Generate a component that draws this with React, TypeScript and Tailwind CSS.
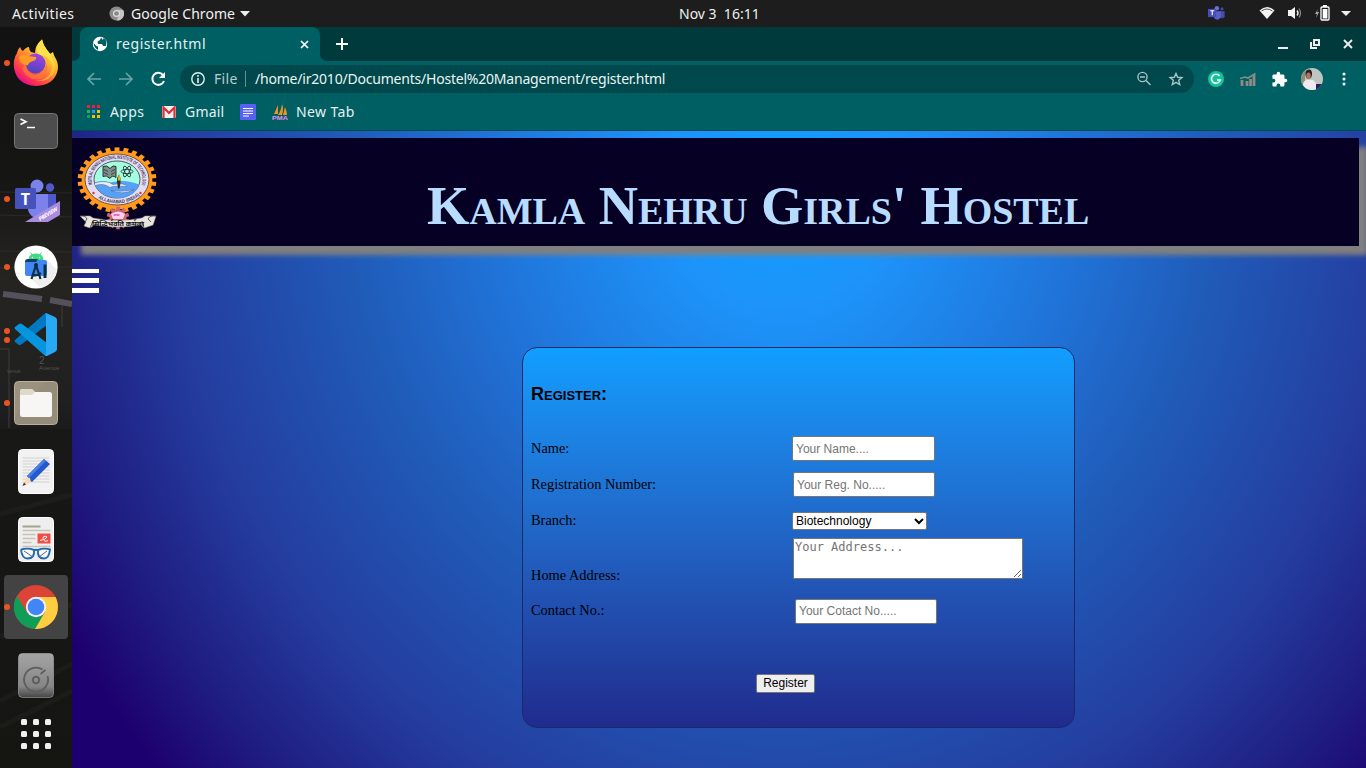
import type { ReactNode } from "react";

const apps = ["#ff1744", "#ff1744", "#ff1744", "#34a853", "#4285f4", "#fbbc05", "#0aa550", "#fbbc05", "#fbbc05"];

function Gear({ cx, cy, r, teeth, tooth, color }: { cx: number; cy: number; r: number; teeth: number; tooth: number; color: string }) {
  return (
    <g fill={color}>
      <circle cx={cx} cy={cy} r={r} />
      {Array.from({ length: teeth }, (_, i) => (
        <rect key={i} x={cx - tooth / 2} y={cy - r - tooth * 0.8} width={tooth} height={tooth * 1.5} transform={`rotate(${(i * 360) / teeth} ${cx} ${cy})`} />
      ))}
    </g>
  );
}

function CollegeLogo() {
  return (
    <svg width="80" height="82" viewBox="0 0 80 82" className="block overflow-visible">
      <defs>
        <path id="ringTop" d="M16 37.500 A25.500 20.800 0 1 1 64 37.500" />
        <path id="ringBottom" d="M14 42.500 A30 23.500 0 0 0 66 42.500" />
      </defs>
      <g transform="translate(0 -2) scale(1 .83)">
        <Gear cx={40} cy={39.8} r={35.4} teeth={26} tooth={4.9} color="#ff9a1c" />
      </g>
      <g transform="translate(0 -0.5)">
        <ellipse cx="40" cy="31" rx="32" ry="25.500" fill="#e2dcf5" stroke="#5b3a2a" strokeWidth=".8" />
        <ellipse cx="40" cy="31" rx="23" ry="18.500" fill="#a3ffe2" stroke="#333" strokeWidth=".8" />
        <path d="M17.500 34 Q25 31 33 34 Q48 30 62 36 Q58 49 40 49.500 Q21 48 17.500 34Z" fill="#55a0f8" />
        <path d="M18 34.500 Q29 31 36 36 Q48 34 50 38 Q36 37 33 39 Q27 34 18 37M34 42 Q44 44 57 41 Q46 47 34 42" fill="#e8ecff" stroke="#446" strokeWidth=".4" />
        <path d="M26 18 Q30 16 33 20 Q36 16 39 18 V29 Q35 26 33 30 Q29 26 26 28Z" fill="#7f8f8b" stroke="#222" strokeWidth=".9" />
        <path d="M27 21 l4 2 M27 24 l4 2 M34 23 l4-2 M34 26 l4-2" stroke="#222" strokeWidth=".7" />
        <g fill="none" stroke="#222" strokeWidth=".8">
          <ellipse cx="50" cy="23" rx="6" ry="2.200" />
          <ellipse cx="50" cy="23" rx="6" ry="2.200" transform="rotate(60 50 23)" />
          <ellipse cx="50" cy="23" rx="6" ry="2.200" transform="rotate(120 50 23)" />
        </g>
        <path d="M42 26 l1.500 4 v4 l-1 6 h-1.500 l-1-7 v-3z" fill="#322915" />
        <path d="M42 25 l1.500 4 v3 h-3z" fill="#d6b340" />
      </g>
      <text fontSize="5" fontWeight="bold" fill="#3c3350" fontFamily="Liberation Sans, sans-serif">
        <textPath href="#ringTop" startOffset="2" textLength="84" lengthAdjust="spacingAndGlyphs">MOTILAL NEHRU NATIONAL INSTITUTE OF TECHNOLOGY</textPath>
      </text>
      <text fontSize="4.800" fontWeight="bold" fill="#3c3350" fontFamily="Liberation Sans, sans-serif">
        <textPath href="#ringBottom" startOffset="10" textLength="44" lengthAdjust="spacingAndGlyphs">ALLAHABAD (INDIA)</textPath>
      </text>
      <circle cx="16.500" cy="44" r="1.200" fill="#d33" />
      <circle cx="63.500" cy="44" r="1.200" fill="#d33" />
      <Gear cx={41} cy={69} r={8.5} teeth={10} tooth={3.5} color="#cc6670" />
      <path d="M34 65 Q41 60 48 65 L46 70 H36Z" fill="#ffd2ef" />
      <text x="36.500" y="67" fontSize="4" fill="#d42fa0" fontWeight="bold" fontFamily="Liberation Sans, sans-serif">ww</text>
      <path d="M3 67 L13 67 16 69 Q40 74 65 69 L68 67 79 67 76 76 67 79 64 76 Q40 80 17 76 L13 79 7 77 9 73Z" fill="#e9e5dc" stroke="#999" strokeWidth=".5" />
      <path d="M3 67 q5 -1 7 3 l-2 3M79 67 q-6 -1 -8 3 l3 3M13 79 l3-7M67 79 l-2-7" fill="none" stroke="#333" strokeWidth=".8" />
      <text x="15" y="76.500" fontSize="7" fontWeight="bold" fill="#111" textLength="52" lengthAdjust="spacingAndGlyphs" fontFamily="Noto Sans, Noto Sans Devanagari, sans-serif">सिद्धिर्भवति कर्मजा</text>
    </svg>
  );
}

function Firefox() {
  return (
    <svg width="46" height="48" viewBox="0 0 46 48">
      <defs>
        <linearGradient id="ffx" x1=".85" y1=".1" x2=".25" y2=".95">
          <stop offset="0" stopColor="#fff04a" />
          <stop offset=".35" stopColor="#ffb52e" />
          <stop offset=".62" stopColor="#ff6a35" />
          <stop offset=".85" stopColor="#ff2f55" />
          <stop offset="1" stopColor="#e3108b" />
        </linearGradient>
        <linearGradient id="ffp" x1=".6" y1="0" x2=".3" y2="1">
          <stop offset="0" stopColor="#a044e8" />
          <stop offset="1" stopColor="#4c43b8" />
        </linearGradient>
      </defs>
      <path d="M4 14 Q5 10 7 8 Q8 11 10 12 Q13 8 16 8 Q16 11 18 13 L22 14 Q22 6 29 .500 Q30 6 34 11 Q36 13 37 15 L40 13 Q41 17 43 20 Q46 26 44.500 32 Q41 46 23 47 Q4 46 1 29 Q0 20 4 14Z" fill="url(#ffx)" />
      <path d="M34 18 Q42 24 37 35 Q33 41 23 42 Q37 43 42 32 Q44 24 40 16Z" fill="#ffc83a" opacity=".7" />
      <circle cx="22.500" cy="24.500" r="10" fill="url(#ffp)" />
      <path d="M6 18 Q10 14 15 17 L23 18 Q24 21 20 22 Q16 23 15 26 Q12 27 7 23Z" fill="#ff9a22" />
      <path d="M13 25 Q13 35 23 36 Q33 34 33 24 Q37 36 27 40 Q13 42 9 29Z" fill="#ff7a3a" opacity=".75" />
      <path d="M25 15 Q21 7 29 .500 Q30 6 34 11 Q41 18 41 28 Q38 20 31 17Z" fill="#ffe24a" />
    </svg>
  );
}

function ChromeIcon() {
  return (
    <svg width="44" height="44" viewBox="0 0 44 44">
      <circle cx="22" cy="22" r="22" fill="#db4437" />
      <path d="M22 44 A22 22 0 0 1 2.900 11 L13 27.500 22 32 30.500 27Z" fill="#0f9d58" />
      <path d="M22 12 H41.500 A22 22 0 0 1 21 44 L31 27Z" fill="#ffcd40" />
      <circle cx="22" cy="22" r="10.200" fill="#f1f1f1" />
      <circle cx="22" cy="22" r="8.300" fill="#4285f4" />
    </svg>
  );
}

function Terminal() {
  return (
    <svg width="44" height="36" viewBox="0 0 44 36">
      <rect x=".5" y=".5" width="43" height="35" rx="4" fill="#4d4d4d" stroke="#777" />
      <path d="M6.500 6 l5.500 2.800 -5.500 2.800" fill="none" stroke="#fff" strokeWidth="1.700" />
      <path d="M13 14.500 h8" stroke="#fff" strokeWidth="1.500" />
    </svg>
  );
}

function Teams() {
  return (
    <svg width="46" height="44" viewBox="0 0 46 44">
      <circle cx="23" cy="7" r="6.500" fill="#7b83eb" />
      <circle cx="36" cy="8.500" r="4.200" fill="#5059c9" />
      <path d="M30 15 H42 V28 Q40 34 33 33Z" fill="#5059c9" />
      <path d="M14 15 H34 V30 Q31 40 23 39 Q16 38 14 31Z" fill="#7b83eb" />
      <rect x="1" y="9" width="21" height="21" rx="1.500" fill="#4652bc" />
      <text x="11.500" y="25.500" textAnchor="middle" fontSize="16" fontWeight="bold" fill="white" fontFamily="Open Sans, sans-serif">T</text>
      <path d="M11 43 L46 22 V36 L34 43Z" fill="#a98bdf" />
      <text transform="translate(26 42) rotate(-31)" fontSize="5.500" fontWeight="bold" fontStyle="italic" fill="white" fontFamily="Open Sans, sans-serif" textLength="21">PREVIEW</text>
    </svg>
  );
}

function Studio() {
  return (
    <svg width="44" height="44" viewBox="0 0 44 44">
      <circle cx="22" cy="22" r="21.600" fill="#fff" />
      <path d="M33 15 L43 25 Q39 39 27 43 L15 32Z" fill="#eee" />
      <path d="M14.500 15 Q14.500 8.500 22 8.500 Q29 8.500 29.500 15Z" fill="#3ddc84" />
      <path d="M16.500 7.500 l2 3 M27.500 7.500 l-2 3" stroke="#3ddc84" />
      <circle cx="18.500" cy="12.500" r=".7" fill="#fff" /><circle cx="25.500" cy="12.500" r=".7" fill="#fff" />
      <rect x="11" y="15" width="22" height="16" rx="2" fill="#4285f4" />
      <path d="M11 17 q0-3 3-3 h10 l-2 3 h-11z" fill="#123d63" />
      <path d="M22 20 L17.500 34 M22 20 L26.500 34 M18 29 Q22 32 27 28" fill="none" stroke="#083042" strokeWidth="2.200" />
      <path d="M31 19.500 V33" fill="none" stroke="#083042" strokeWidth="3" />
      <circle cx="22" cy="20" r="2" fill="#083042" />
    </svg>
  );
}

function Code() {
  return (
    <svg width="44" height="44" viewBox="0 0 44 44">
      <path d="M1 27 Q0 28 1 29 L5 32 Q6 32.500 8 31 L33 12 V0 Q31 0 29 2Z" fill="#0078c4" />
      <path d="M1 16 Q0 15 1 14 L5 11 Q6 10 8 11 L33 30 V43 Q31 43 29 41Z" fill="#0795de" />
      <path d="M31 0 Q32 0 33 .500 L41 4 Q43 5 43 7 V36 Q43 38 41 39 L33 43 Q31 43 30 42 Q32 43 32 39 V3 Q32 1 31 0Z" fill="#29a9f3" />
    </svg>
  );
}

function Files() {
  return (
    <svg width="44" height="44" viewBox="0 0 44 44">
      <rect x=".5" y=".5" width="43" height="43" rx="4" fill="#9b917e" stroke="#bab09c" />
      <path d="M1 34 L30 1 H40 Q43 1 43 5 V40 Q43 43 39 43 H4 Q1 43 1 39Z" fill="#898172" opacity=".3" />
      <path d="M6 11 Q6 8 8 8 H18 L21 11 V20 H6Z" fill="#ddd6c5" />
      <rect x="6" y="11" width="32" height="25" rx="2.500" fill="#f7f6f5" />
      <path d="M6 11 Q6 8 8 8 H18 L21 11 18 14 H6Z" fill="#ded9c9" />
    </svg>
  );
}

function Editor() {
  return (
    <svg width="36" height="45" viewBox="0 0 36 45">
      <rect x=".5" y=".5" width="35" height="44" rx="4" fill="#f2f2f2" stroke="#fff" />
      <path d="M4.500 9 h27 M4.500 12 h27 M4.500 15 h27 M4.500 18 h27 M4.500 21 h27 M4.500 24 h27 M4.500 27 h27 M4.500 30 h27 M4.500 33 h27" stroke="#d0d0d0" />
      <path d="M4.500 37 L9 27 L14 33Z" fill="#fbd9b6" />
      <path d="M4.500 37 l1.500-3.500 2 2z" fill="#333" />
      <path d="M9 27 L26 10 L32 15 L14 33 Q12 32 12 29 Q10 29 9 27Z" fill="#2458cf" />
      <path d="M9 27 L26 10 L28 12 L11 29Z" fill="#4a7ee6" />
    </svg>
  );
}

function Reader() {
  return (
    <svg width="36" height="45" viewBox="0 0 36 45">
      <rect x=".5" y=".5" width="35" height="44" rx="4" fill="#eee" stroke="#fff" />
      <path d="M4.500 9.500 h18" stroke="#a6a28d" strokeWidth="2" />
      <path d="M4.500 13.500 h28 M4.500 17.500 h13 M4.500 21.500 h13 M4.500 25.500 h9 M4.500 29.500 h28" stroke="#c6c3b5" strokeWidth="1.700" />
      <rect x="19.500" y="16.500" width="13" height="10" fill="#f24d43" />
      <path d="M22 23.500 q6-1 7-3.500 q-4-2-4 1.500 q1 4 5 2" fill="none" stroke="white" />
      <path d="M3 32.500 Q10 30.500 16 33 Q17 41.500 9.500 41.500 Q4 41.500 3 32.500 M20 33 Q26 30.500 32 32.500 Q31 41.500 26 41.500 Q19 41.500 20 33 M16 33.500 q2-1.500 4 0" fill="#ffffff88" stroke="#2468ac" strokeWidth="1.900" />
      <path d="M6 34 L15 40 M21 40 L29 34" stroke="#667" strokeWidth="1" />
    </svg>
  );
}

function Disk() {
  return (
    <svg width="36" height="45" viewBox="0 0 36 45">
      <defs>
        <linearGradient id="disk" x2="0" y2="1">
          <stop stopColor="#a4a4a4" />
          <stop offset=".75" stopColor="#868686" />
          <stop offset="1" stopColor="#454545" />
        </linearGradient>
      </defs>
      <rect x=".5" y=".5" width="35" height="44" rx="4" fill="url(#disk)" stroke="#bbb" strokeOpacity=".5" />
      <path d="M24.500 16.500 A12 12 0 1 0 29.500 23 M22.500 21 l5-4" fill="none" stroke="#5e5e5e" strokeWidth="1.800" />
      <circle cx="18" cy="27" r="3.200" fill="none" stroke="#5e5e5e" strokeWidth="2" />
    </svg>
  );
}

function DockItem({ children, dots = 0, active = false }: { children: ReactNode; dots?: number; active?: boolean }) {
  return (
    <div className="relative flex h-[68px] w-full items-center justify-center">
      {active && <div className="absolute inset-x-1 inset-y-0.5 rounded-[4px] bg-[#434343]" />}
      {dots > 0 && (
        <div className="absolute left-1 flex flex-col gap-[3px]">
          <i className="block size-[6px] rounded-full bg-[#e95420]" />
          {dots === 2 && <i className="block size-[6px] rounded-full bg-[#e95420]" />}
        </div>
      )}
      <div className="relative">{children}</div>
    </div>
  );
}

function Dock() {
  return (
    <aside className="relative h-[741px] w-[72px] shrink-0 overflow-hidden bg-[#171717]">
      <svg className="absolute inset-0" width="72" height="741">
        <defs>
          <linearGradient id="dock" x2="0" y2="1">
            <stop stopColor="#121212" />
            <stop offset=".2" stopColor="#151514" />
            <stop offset=".34" stopColor="#252421" />
            <stop offset=".5" stopColor="#202020" />
            <stop offset=".58" stopColor="#171716" />
            <stop offset="1" stopColor="#151512" />
          </linearGradient>
        </defs>
        <rect width="72" height="741" fill="url(#dock)" />
        <path d="M0 165 L72 166 M0 188 L72 190 M0 224 L72 225 M0 241 L72 240" stroke="#3b352a" strokeWidth="1" opacity=".6" />
        <path d="M3 267 L42 272 M50 273 L72 277" stroke="#615d6d" strokeWidth="6" opacity=".8" />
        <path d="M0 322 H9 V401 M62 278 V300" fill="none" stroke="#3e3b36" strokeWidth="2" opacity=".55" />
        <path d="M0 402 H72 V470 L0 487Z" fill="#181817" />
        <path d="M0 487 L72 468 M0 610 L72 577 M0 674 L72 637 M0 700 L72 664" fill="none" stroke="#292824" strokeWidth="5" opacity=".35" />
        <g fill="#54514d" fontFamily="Liberation Sans, sans-serif">
          <text x="39" y="337" fontSize="10">2</text>
          <text x="39" y="343" fontSize="6">Avenue</text>
          <text x="7" y="346" fontSize="5">venue</text>
        </g>
      </svg>
      <div className="relative flex flex-col items-center pt-[2px]">
        <DockItem dots={1}><Firefox /></DockItem>
        <DockItem><Terminal /></DockItem>
        <DockItem dots={1}><div className="pl-0.5 pt-1"><Teams /></div></DockItem>
        <DockItem dots={1}><Studio /></DockItem>
        <DockItem dots={2}><Code /></DockItem>
        <DockItem dots={1}><Files /></DockItem>
        <DockItem><Editor /></DockItem>
        <DockItem><Reader /></DockItem>
        <DockItem dots={1} active><ChromeIcon /></DockItem>
        <DockItem><Disk /></DockItem>
        <div className="mt-[10px] grid grid-cols-3 gap-[6px]">
          {apps.map((_, i) => <i key={i} className="block size-[6px] rounded-[1.5px] bg-[#f0f0f0]" />)}
        </div>
      </div>
    </aside>
  );
}

function TopBar() {
  return (
    <header className="relative flex h-[27px] items-center bg-[#1d1d1d] pl-3 text-[14px] text-[#f0f0f0]">
      <span className="w-[97px] tracking-[0.4px]">Activities</span>
      <svg width="15" height="15" viewBox="0 0 16 16">
        <circle cx="8" cy="8" r="7.500" fill="#8c8c8c" />
        <path d="M8 4 h7 A7.500 7.500 0 0 1 8 15.500 L11 9Z" fill="#c4c4c4" />
        <circle cx="8" cy="8" r="3.800" fill="#ddd" /><circle cx="8" cy="8" r="2.500" fill="#888" />
      </svg>
      <span className="ml-[7px] w-[105px] tracking-[0.05px]">Google Chrome</span>
      <svg width="12" height="6" className="ml-[3px]"><path d="M1 0 H11 L6 5.500Z" fill="#eee" /></svg>
      <span className="absolute left-[679px] pb-px">Nov 3&nbsp; 16:11</span>
      <div className="ml-auto flex items-center pr-[15px] pb-px">
        <svg width="17" height="16" viewBox="0 0 46 40"><circle cx="24" cy="7" r="6" fill="#6871d5" /><circle cx="38" cy="9" r="4" fill="#444cae" /><path d="M29 15 H45 V31 Q38 38 30 31Z" fill="#444cae" /><path d="M16 15 H35 V31 Q27 45 16 33Z" fill="#5961c8" /><rect y="9" width="22" height="22" fill="#454dbc" /><path d="M6 14 H17 M11.500 14 V26" stroke="#fff" strokeWidth="3" /></svg>
        <svg width="16" height="14" viewBox="0 0 16 14" className="ml-[34px]"><path d="M.5 4.500 Q8-2.500 15.500 4.500 L8 13Z" fill="#f4f4f4" /><path d="M2.500 5 Q8 1 13.500 5" fill="none" stroke="#555" strokeWidth="1" /></svg>
        <svg width="16" height="14" viewBox="0 0 16 14" className="ml-3"><path d="M1 4 H4 L8 1 V13 L4 10 H1Z" fill="#f4f4f4" /><path d="M10 4.500 q2 2.500 0 5" fill="none" stroke="#eee" strokeWidth="1.400" /><path d="M12 2.500 q3 4.500 0 9" fill="none" stroke="#888" strokeWidth="1.200" /></svg>
        <svg width="15" height="16" viewBox="0 0 15 16" className="ml-3"><path d="M3 4 L0 9 H2 L1 13 L4 7 H2Z" fill="#aaa" /><rect x="6" y="2" width="8" height="13" rx="1" fill="none" stroke="#fff" strokeWidth="1.300" /><path d="M8 0 h4 v2 H8Z M7.700 4 h4.700 v9.500 H7.700Z" fill="#fff" /></svg>
        <svg width="10" height="5" className="ml-[11px]"><path d="M0 0 H10 L5 5Z" fill="#eee" /></svg>
      </div>
    </header>
  );
}

function Browser() {
  return (
    <div className="h-[104px] bg-[#005f63] text-[14px] text-[#e5f1f1]">
      <div className="flex h-[34px] bg-[#003a3d]">
        <div className="flex w-2 items-end bg-[#005f63]"><div className="h-full w-full rounded-br-[7px] bg-[#003a3d]" /></div>
        <div className="flex w-[240px] items-center rounded-t-[8px] bg-[#005f63] pl-[12px]">
          <svg width="16" height="16" viewBox="0 0 16 16"><circle cx="8" cy="8" r="7.200" fill="#fff" /><path d="M1.500 7 L4.500 10 6 10.500 6 14 Q2 12 1.500 7 M9 1.500 L8 4 5.500 5.500 6 8 10 8 11 10 14 10 Q15.500 4 11.500 2 L11 4Z" fill="#005f63" /></svg>
          <span className="ml-[8px] pb-[2px] tracking-[0.55px]">register.html</span>
          <svg width="9" height="9" className="ml-auto mr-[11.5px]"><path d="M1 1 L8 8 M8 1 L1 8" stroke="#fff" strokeWidth="1.700" /></svg>
        </div>
        <div className="w-2 bg-[#005f63]"><div className="h-full rounded-bl-[7px] bg-[#003a3d]" /></div>
        <svg width="12" height="12" className="ml-2 mt-[11px]"><path d="M6 0 V12 M0 6 H12" stroke="#fff" strokeWidth="2" /></svg>
        <svg width="76" height="12" className="ml-auto mr-[12px] mt-[11px]"><path d="M0 10 h10" stroke="#eee" strokeWidth="2" /><path d="M36 2 h5 v5 h-5z M33 4 v6 h6" fill="none" stroke="#eee" strokeWidth="2" /><path d="M66 2 L74 10 M74 2 L66 10" stroke="#eee" strokeWidth="1.900" /></svg>
      </div>
      <div className="flex h-[36px] items-center">
        <svg width="80" height="18" className="ml-[14px]" fill="none" strokeWidth="1.700">
          <path d="M15 9 H2 M8 3 L2 9 8 15 M33 9 H46 M40 3 L46 9 40 15" stroke="#6aa3a5" />
          <path d="M77 5 A6 6 0 1 0 78 11" stroke="#fff" strokeWidth="2" /><path d="M79 2 V8 H73Z" fill="#fff" />
        </svg>
        <div className="ml-[14px] flex h-7 w-[1014px] items-center rounded-full bg-[#00484c] pl-[11px]">
          <svg width="14" height="14"><circle cx="7" cy="7" r="6.200" fill="none" stroke="#e5f1f1" strokeWidth="1.400" /><path d="M7 3 V4.800 M7 6 V11" stroke="#e5f1f1" strokeWidth="1.600" /></svg>
          <span className="ml-[9px] w-[31px] pb-[2px] tracking-[0.3px] text-[#b4cfcf]">File</span>
          <i className="h-4 w-px bg-[#668d8f]" />
          <span className="ml-[9px] pb-[2px] tracking-[-0.21px] text-[#e8f5f4]">/home/ir2010/Documents/Hostel%20Management/register.html</span>
          <svg width="47" height="16" className="ml-auto mr-[10px]" fill="none" stroke="#a8c4c5" strokeWidth="1.400"><circle cx="5.500" cy="6" r="4.600" /><path d="M9 9.500 L13.500 14 M3 6 H8" /><path d="M39 2.500 L40.700 6.300 44.900 6.600 41.700 9.300 42.700 13.500 39 11.300 35.300 13.500 36.300 9.300 33.100 6.600 37.300 6.300Z" /></svg>
        </div>
        <svg width="16" height="16" viewBox="0 0 16 16" className="ml-[14px]"><circle cx="8" cy="8" r="8" fill="#15c39a" /><path d="M11.500 5 A4.500 4.500 0 1 0 12.300 9 H9" fill="none" stroke="#fff" strokeWidth="1.500" /></svg>
        <svg width="16" height="14" className="ml-[16px]"><path d="M2 14 V8 M7 14 V9 M10.500 14 V7 M14 14 V3" stroke="#8f8a86" strokeWidth="2.800" /><path d="M0 6.500 L5 5 8 6 15.500 1.500" fill="none" stroke="#8f8a86" strokeWidth="1.600" /></svg>
        <svg width="17" height="17" viewBox="0 0 24 24" className="ml-[15px]" fill="#fff"><path d="M20.500 11H19V7c0-1.100-.9-2-2-2h-4V3.500a2.500 2.500 0 0 0-5 0V5H4c-1.100 0-2 .9-2 2v3.800h1.500a2.700 2.700 0 0 1 0 5.400H2V20c0 1.100.9 2 2 2h3.800v-1.500a2.700 2.700 0 0 1 5.400 0V22H17c1.100 0 2-.9 2-2v-4h1.500a2.500 2.500 0 0 0 0-5z" /></svg>
        <svg width="22" height="22" viewBox="0 0 22 22" className="ml-[12.5px]"><defs><clipPath id="avatar"><circle cx="11" cy="11" r="11" /></clipPath></defs><g clipPath="url(#avatar)"><rect width="22" height="22" fill="#bdc6c0" /><path d="M0 0 H5 L3 22 H0V0Z" fill="#8f8c79" /><path d="M4.500 7 Q4 1.500 8 1.500 Q11.500 1.500 11 7 L10 10 H5.500Z" fill="#292320" /><ellipse cx="7.500" cy="8" rx="2.300" ry="3.500" fill="#a87560" /><path d="M1 22 L2.500 14 6 11.500 12 12 15 15 15 22Z" fill="#eeeaf0" /><path d="M15 16 h7 v6 h-7z" fill="#29215a" /></g></svg>
        <svg width="4" height="16" className="ml-[19.5px]" fill="#fff"><circle cx="2" cy="3" r="1.500" /><circle cx="2" cy="8" r="1.500" /><circle cx="2" cy="13" r="1.500" /></svg>
      </div>
      <div className="flex h-[34px] items-center border-b border-[#014a55] pb-[3px] pl-[15px]">
        <svg width="13" height="14">{apps.map((color, i) => <rect key={i} x={(i % 3) * 5} y={Math.floor(i / 3) * 5} width="3" height="3" fill={color} />)}</svg>
        <span className="ml-[10px] w-[36px] pb-px tracking-[0.4px]">Apps</span>
        <svg width="14" height="12" className="ml-[16px]"><rect width="14" height="12" rx="1" fill="#f4f0f0" /><path d="M1.500 12 V1.500 L7 7 12.500 1.500 V12" fill="none" stroke="#dc3039" strokeWidth="2.200" /></svg>
        <span className="ml-[9px] w-[39px] pb-px tracking-[0.2px]">Gmail</span>
        <svg width="16" height="16" className="ml-[16px]"><rect width="16" height="16" rx="1" fill="#5961f5" /><path d="M3 4.500 H13 M3 7 H13 M3 9.500 H13 M3 12 H9" stroke="#fff" strokeWidth="1.200" /></svg>
        <svg width="17" height="16" viewBox="0 0 17 16" className="ml-4"><path d="M6 1 L6 10 2 10Z M10 0 Q12 5 10 11 L6 11Q9 7 10 0 M13 3 Q15 8 15 11 H11Z" fill="#ee941c" /><path d="M0 14.500 H16" stroke="#4a3d80" strokeWidth="3" /><text x="0" y="15.500" fontSize="6" fontWeight="bold" fill="#b9a9e0" textLength="16" lengthAdjust="spacingAndGlyphs" fontFamily="Liberation Sans, sans-serif">PMA</text></svg>
        <span className="ml-[7px] pb-px tracking-[0.4px]">New Tab</span>
      </div>
    </div>
  );
}

const fieldClass = "h-[25px] rounded-[2px] border border-[#767676] bg-white px-[3px] font-['Liberation_Sans',sans-serif] text-[12px] placeholder:text-[#757575]";

function PageContent() {
  return (
    <main className="h-[637px] overflow-hidden bg-[radial-gradient(825px_900px_at_710px_50px,#109dff_0%,#1d94fa_14%,#2073d8_36%,#205cb9_52%,#243d9f_74%,#1f1b80_90%,#1d006f_100%)] pt-[7px] font-['Liberation_Serif',serif]">
      <div className="flex h-[108px] w-[1287px] bg-[#070025] pl-[5px] pt-[11px] shadow-[9px_9px_5px_#808080]">
        <CollegeLogo />
        <h1 className="ml-[270px] mt-[24px] whitespace-nowrap text-[54.4px] leading-[66px] font-bold tracking-[-0.05px] text-[#b7dcff] [font-variant-caps:small-caps]">Kamla Nehru Girls' Hostel</h1>
      </div>
      <div className="mt-[23px] flex w-[27px] flex-col gap-[5px]">
        <i className="block h-[4px] bg-white" />
        <i className="block h-[5px] bg-white" />
        <i className="block h-[5px] bg-white" />
      </div>
      <form onSubmit={(e) => e.preventDefault()} className="ml-[450px] mt-[54px] h-[381px] w-[553px] rounded-[15px] border border-[#172b68] bg-linear-to-b from-[#109eff] to-[#202b8d] pl-[8px] text-[14.4px] text-black">
        <h2 className="pt-[36px] font-['Liberation_Sans',sans-serif] text-[18px] leading-[20px] font-bold [font-variant-caps:small-caps]">Register:</h2>
        <div className="mt-[32px] flex h-[25px] items-center">
          <label className="w-[261px]">Name:</label>
          <input placeholder="Your Name...." className={`${fieldClass} w-[143px]`} />
        </div>
        <div className="mt-[11px] flex h-[25px] items-center">
          <label className="w-[262px]">Registration Number:</label>
          <input placeholder="Your Reg. No....." className={`${fieldClass} w-[142px]`} />
        </div>
        <div className="mt-[15px] flex h-[18px] items-center">
          <label className="w-[261px]">Branch:</label>
          <div className="relative">
            <select className="block h-[18px] w-[135px] appearance-none rounded-[2px] border border-[#767676] bg-white pl-[3px] font-['Liberation_Sans',sans-serif] text-[12px] leading-[16px]"><option>Biotechnology</option></select>
            <svg width="10" height="7" className="pointer-events-none absolute right-[3px] top-[6px]"><path d="M1 1 L5 5 9 1" fill="none" stroke="#000" strokeWidth="2" /></svg>
          </div>
        </div>
        <div className="mt-[8px] flex h-[46px] items-end">
          <label className="w-[262px] leading-[18px]">Home Address:</label>
          <textarea placeholder="Your Address..." className="mb-[5px] h-[41px] w-[230px] resize rounded-[1px] border border-[#767676] bg-white px-[1px] py-[1px] font-['DejaVu_Sans_Mono',monospace] text-[12px] leading-[14px] placeholder:text-[#757575]" />
        </div>
        <div className="mt-[15px] flex h-[25px] items-center">
          <label className="w-[264px] pb-[2px]">Contact No.:</label>
          <input placeholder="Your Cotact No....." className={`${fieldClass} w-[142px] pb-px`} />
        </div>
        <button className="ml-[225px] mt-[50px] block h-[19px] w-[59px] rounded-[2px] border border-[#767676] bg-[#efefef] pb-px font-['Liberation_Sans',sans-serif] text-[12px] leading-[16px]">Register</button>
      </form>
    </main>
  );
}

export default function App() {
  return (
    <div className="h-[768px] w-[1366px] overflow-hidden font-['Noto_Sans',sans-serif]">
      <TopBar />
      <div className="flex">
        <Dock />
        <div className="w-[1294px]">
          <Browser />
          <PageContent />
        </div>
      </div>
    </div>
  );
}
